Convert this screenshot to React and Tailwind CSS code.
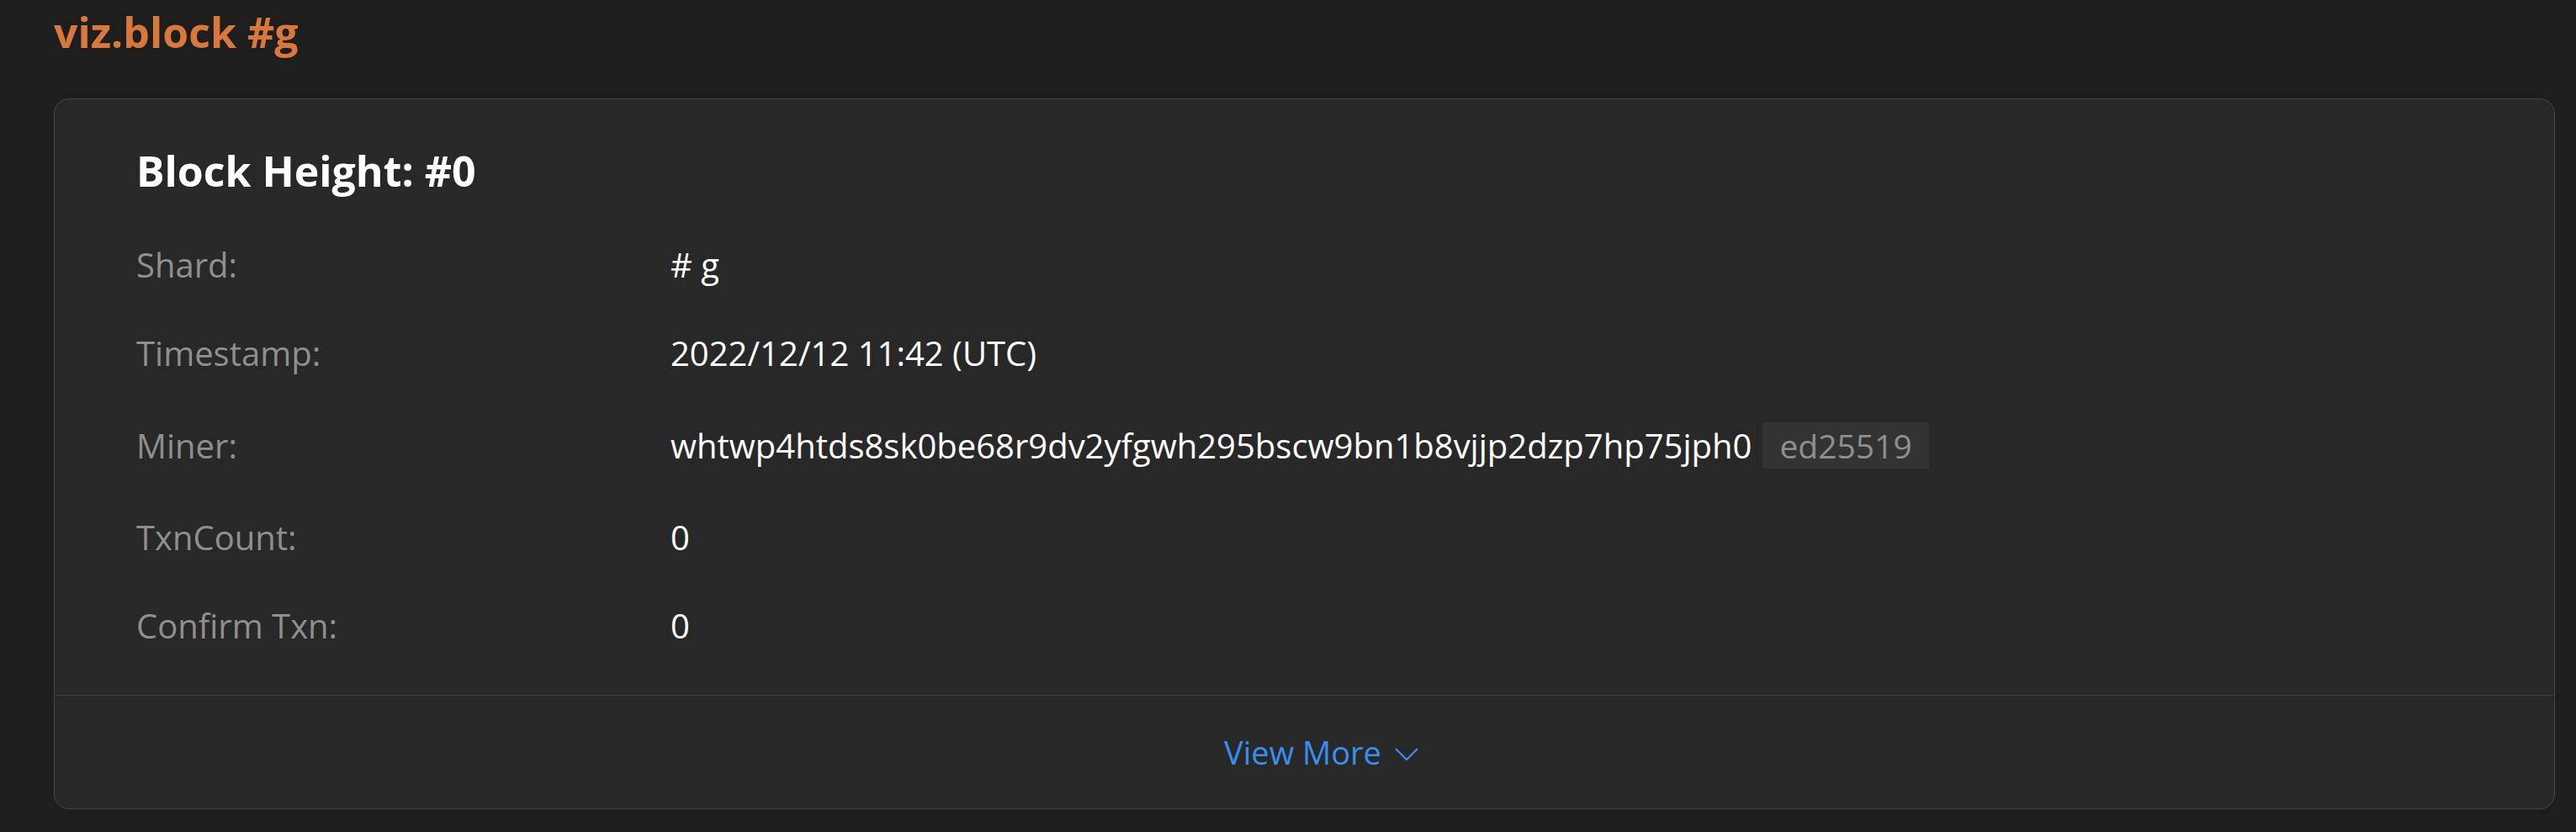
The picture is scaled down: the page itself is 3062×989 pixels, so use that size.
import React from "react";

const rows = [
  { label: "Shard:", value: "# g" },
  { label: "Timestamp:", value: "2022/12/12 11:42 (UTC)" },
  { label: "Miner:", value: "whtwp4htds8sk0be68r9dv2yfgwh295bscw9bn1b8vjjp2dzp7hp75jph0", badge: "ed25519" },
  { label: "TxnCount:", value: "0" },
  { label: "Confirm Txn:", value: "0" },
];

export default function App() {
  return (
    <div
      className="min-h-[989px] w-full bg-[#1e1e1e] pl-[64px] pr-[25px] pt-[3px]"
      style={{ fontFamily: '"Open Sans", "Noto Sans", sans-serif' }}
    >
      <h1 className="text-[50px] leading-[70px] font-bold text-[#d8783c]">viz.block #g</h1>
      <div className="mt-[44px] rounded-[18px] border border-[#464646] bg-[#282828]">
        <div className="pl-[97px] pt-[50px] pb-[54px]">
          <h2 className="text-[50px] leading-[70px] font-bold text-white">Block Height: #0</h2>
          <div className="mt-[49px] flex flex-col gap-[49px]">
            {rows.map((r) => (
              <div key={r.label} className="flex items-center text-[40px] leading-[56px]">
                <div className="w-[635px] shrink-0 text-[#8f8f8f]">{r.label}</div>
                <div className="flex items-center text-white">
                  <span>{r.value}</span>
                  {r.badge && (
                    <span className="ml-[13px] my-[5px] flex h-[55px] items-center bg-[#333333] px-[20px] text-[39px] text-[#8f8f8f]">
                      {r.badge}
                    </span>
                  )}
                </div>
              </div>
            ))}
          </div>
        </div>
        <div className="flex h-[135px] items-center justify-center border-t border-[#404040] pl-[40px]">
          <span className="text-[38px] leading-[56px] text-[#3a8ef0]">View More</span>
          <svg className="ml-[16px] mt-[6px]" width="28" height="18" viewBox="0 0 28 18" fill="none">
            <polyline points="1,2 14,15 27,2" stroke="#3a8ef0" strokeWidth="2.2" />
          </svg>
        </div>
      </div>
    </div>
  );
}
